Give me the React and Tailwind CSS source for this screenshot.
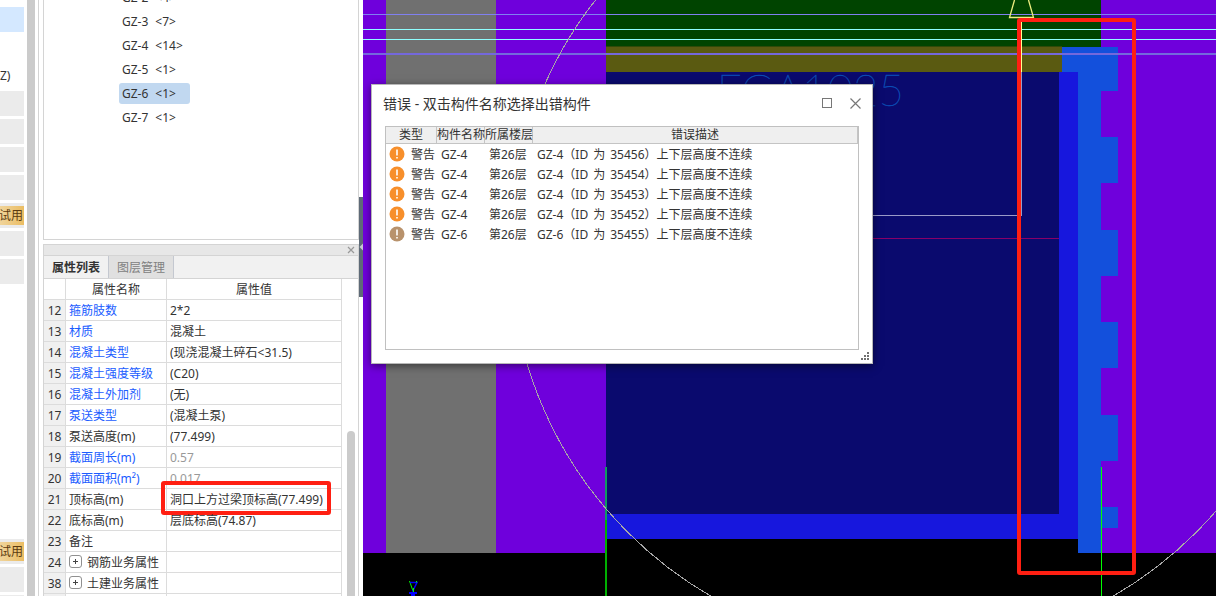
import React, { useState } from "react";

const style = {
  page: "relative flex h-screen w-full overflow-hidden bg-white text-xs text-[#333] font-['Noto_Sans','Noto_Sans_CJK_SC',sans-serif]",
  cell: "h-[21px] p-0 pt-[2px] border-r border-b border-[#dcdcdc] leading-4 font-normal whitespace-nowrap",
  head: "h-[17px] p-0 border-r border-b border-[#c4c4c4] bg-[#efefef] leading-4 font-normal whitespace-nowrap",
};

const navItems = [
  { type: "active" },
  { type: "plain" },
  { type: "plain", text: "Z)" },
  { type: "group" },
  { type: "group" },
  { type: "group" },
  { type: "group" },
  { type: "group", trial: true },
  { type: "group" },
  { type: "group" },
  ...Array.from({ length: 9 }, () => ({ type: "plain" })),
  { type: "group", trial: true },
  { type: "group" },
  { type: "group" },
];

const navBg = {
  active: "bg-[#d4e8ff]",
  plain: "bg-white",
  group: "bg-[#ebebeb]",
};

const columns = [
  { name: "GZ-2", count: 4 },
  { name: "GZ-3", count: 7 },
  { name: "GZ-4", count: 14 },
  { name: "GZ-5", count: 1 },
  { name: "GZ-6", count: 1 },
  { name: "GZ-7", count: 1 },
];

const properties = [
  { no: 12, name: "箍筋肢数", value: "2*2", blue: true },
  { no: 13, name: "材质", value: "混凝土", blue: true },
  { no: 14, name: "混凝土类型", value: "(现浇混凝土碎石<31.5)", blue: true },
  { no: 15, name: "混凝土强度等级", value: "(C20)", blue: true },
  { no: 16, name: "混凝土外加剂", value: "(无)", blue: true },
  { no: 17, name: "泵送类型", value: "(混凝土泵)", blue: true },
  { no: 18, name: "泵送高度(m)", value: "(77.499)" },
  { no: 19, name: "截面周长(m)", value: "0.57", blue: true, locked: true },
  { no: 20, name: "截面面积(m²)", value: "0.017", blue: true, locked: true },
  { no: 21, name: "顶标高(m)", value: "洞口上方过梁顶标高(77.499)", marked: true },
  { no: 22, name: "底标高(m)", value: "层底标高(74.87)" },
  { no: 23, name: "备注", value: "" },
  { no: 24, name: "钢筋业务属性", value: "", group: true },
  { no: 38, name: "土建业务属性", value: "", group: true },
  { no: "", name: "", value: "" },
];

const errors = [
  { name: "GZ-4", id: 35456 },
  { name: "GZ-4", id: 35454 },
  { name: "GZ-4", id: 35453 },
  { name: "GZ-4", id: 35452 },
  { name: "GZ-6", id: 35455, visited: true },
];

const NavStrip = () => (
  <nav className="w-[27px] shrink-0 overflow-hidden pt-[7px] pr-[3px]">
    {navItems.map((item, i) => (
      <div
        key={i}
        className={`mb-[3px] flex h-[25px] items-center overflow-hidden ${navBg[item.type]}`}
      >
        {item.text}
        {item.trial && (
          <div className="flex h-[19px] w-full items-center justify-end bg-linear-to-r from-[#f0d49a] to-[#ebbd62] pr-px whitespace-nowrap text-[#5a3a10]">
            费试用
          </div>
        )}
      </div>
    ))}
  </nav>
);

const ColumnTree = ({ selected, onSelect }) => (
  <div className="h-60 shrink-0 overflow-hidden border-x border-b border-[#d4d4d4]">
    <ul className="-mt-[15px] pl-[75px]">
      {columns.map((c) => (
        <li key={c.name} className="flex h-6 items-center">
          <button
            onClick={() => onSelect(c.name)}
            className={`flex h-[21px] min-w-[71px] items-center gap-[7px] rounded-[3px] px-[3px] pt-[2px] ${
              selected === c.name ? "bg-[#c1d8f0]" : ""
            }`}
          >
            <span>{c.name}</span>
            <span>&lt;{c.count}&gt;</span>
          </button>
        </li>
      ))}
    </ul>
  </div>
);

const PropertyPanel = () => {
  const [tab, setTab] = useState(0);
  return (
    <div className="mt-1 flex min-h-0 flex-1 flex-col overflow-hidden border-x border-[#d4d4d4]">
      <div className="flex h-3 shrink-0 items-center justify-end border-y border-[#d4d4d4] bg-[#e7e7e7] pr-[3px]">
        <button aria-label="关闭">
          <svg width="8" height="8" viewBox="0 0 8 8" stroke="#999" strokeWidth="1.2">
            <path d="M1 1L7 7M7 1L1 7" />
          </svg>
        </button>
      </div>
      <div className="flex h-[23px] shrink-0 border-b border-[#d4d4d4] bg-[#f1f1f1]">
        {["属性列表", "图层管理"].map((t, i) => (
          <button
            key={t}
            onClick={() => setTab(i)}
            className={`w-[65px] border-r border-[#c4c8d0] pt-[2px] ${
              tab === i ? "bg-[#f1f1f1] font-bold" : "bg-[#e0e0e0] text-[#808080]"
            }`}
          >
            {t}
          </button>
        ))}
      </div>
      <div className="flex min-h-0 flex-1">
        <div className="min-w-0 flex-1">
          <table className="w-full table-fixed border-separate border-spacing-0">
            <colgroup>
              <col className="w-[22px]" />
              <col className="w-[101px]" />
              <col />
            </colgroup>
            <thead>
              <tr>
                <th className={style.cell}></th>
                <th className={style.cell}>属性名称</th>
                <th className={style.cell}>属性值</th>
              </tr>
            </thead>
            <tbody>
              {properties.map((p, i) => (
                <tr key={i}>
                  <td className={`${style.cell} bg-[#f0f0f0] text-center`}>{p.no}</td>
                  <td className={`${style.cell} ${p.blue ? "text-[#1a5cff]" : ""}`}>
                    <div className="flex items-start pl-[3px]">
                      {p.group && (
                        <button
                          aria-label={p.name}
                          className="mr-[5px] flex h-[13px] w-[13px] items-center justify-center rounded-[3px] border border-[#909090]"
                        >
                          <svg width="7" height="7" viewBox="0 0 7 7" stroke="#444">
                            <path d="M1 3.5H6M3.5 1V6" />
                          </svg>
                        </button>
                      )}
                      {p.name}
                    </div>
                  </td>
                  <td
                    className={`${style.cell} relative pl-[3px] ${
                      p.locked ? "text-[#999]" : ""
                    }`}
                  >
                    {p.value}
                    {p.marked && (
                      <div className="absolute -top-2 -left-[6px] h-[34px] w-[170px] rounded-[3px] border-4 border-[#ff1f12]"></div>
                    )}
                  </td>
                </tr>
              ))}
            </tbody>
          </table>
        </div>
        <div className="flex w-4 shrink-0 justify-end pt-[152px] pr-[3px]">
          <div className="w-2 rounded-t-full bg-[#cbcbcb]"></div>
        </div>
      </div>
    </div>
  );
};

const Splitter = () => (
  <div className="flex w-1 shrink-0 flex-col pt-[197px]">
    <div className="flex h-[100px] items-center bg-[#5f6b78]">
      <svg width="4" height="8" viewBox="0 0 4 8" fill="#c8ccd2">
        <path d="M4 0.5V7.5L0.5 4Z" />
      </svg>
    </div>
  </div>
);

const ModelView = () => (
  <div className="relative min-w-0 flex-1 overflow-hidden bg-black">
    <svg
      className="absolute inset-0 h-full w-full"
      viewBox="363 0 853 596"
      preserveAspectRatio="xMinYMin slice"
      fill="none"
    >
      {/* slabs and walls */}
      <g shapeRendering="crispEdges">
        <path fill="#6f00dc" d="M363 0H606V553H363ZM1101 0H1216V553H1101Z" />
        <path fill="#707070" d="M386 0H496V553H386Z" />
        <path fill="#004400" d="M606 0H1101V47H606Z" />
        <path fill="#5a5a11" d="M606 47H1062V72H606Z" />
        <path fill="#304a08" d="M606 46H1062V47H606Z" />
        <path fill="#1717dd" d="M606 72H1078V539H606Z" />
        <path fill="#0a0a6e" d="M606 72H1059V514H606Z" />
        <path
          fill="#1350dc"
          d="M1062 47H1118V91H1101V137H1118V183H1101V230H1118V276H1101V322H1118V368H1101V415H1118V461H1101V507H1118V528H1101V553H1078V72H1062Z"
        />
      </g>

      <text
        x="904"
        y="106"
        textAnchor="end"
        fill="#0a4cb4"
        stroke="#0a4cb4"
        strokeWidth="0.4"
        fontSize="44"
        fontWeight="100"
        fontFamily="Lato, sans-serif"
      >
        FGA1025
      </text>

      {/* axis lines */}
      <g shapeRendering="crispEdges">
        <path stroke="#8080f0" d="M363 14.5H1216" />
        <path stroke="#90ffff" d="M363 29.5H1216M363 39.5H1216" />
        <path stroke="#7468dc" strokeWidth="2" d="M363 54H1216" />
        <path stroke="#9a9ac8" d="M606 215.5H1021.5V72" />
        <path stroke="#ffff90" d="M1021.5 72V18" />
        <path stroke="#880068" d="M606 238.5H1059" />
        <path stroke="#109a60" strokeWidth="2" d="M606 467V520" />
        <path stroke="#00b000" strokeWidth="2" d="M606 520V596" />
        <path stroke="#00ff00" d="M1101.5 467V596" />
        <circle cx="912" cy="248" r="402" stroke="#a8a8a8" />
      </g>
      <path stroke="#eeee80" strokeWidth="1.3" d="M1014.5 0L1009.5 17.5H1033.5L1028.5 0" />

      {/* origin mark */}
      <path stroke="#00ff00" d="M409.5 581L413 591" />
      <path stroke="#0000ff" strokeWidth="1.5" d="M410 582.5H417L412.5 591.5" />
      <path stroke="#00ff00" d="M416.5 581V582.5M413.5 588V592" />
      <path fill="#0000ff" d="M409 592H417V594H415V596H411V594H409Z" />

      <rect x="1019" y="20" width="115" height="553" rx="1" stroke="#ff1f12" strokeWidth="4" />
    </svg>
  </div>
);

const WarnIcon = ({ visited }) => (
  <svg width="16" height="16" viewBox="0 0 16 16">
    <circle cx="8" cy="8" r="7.5" fill={visited ? "#b8926c" : "#f78f2b"} />
    <path d="M8 3.5V9.5" stroke="#fff" strokeWidth="1.6" />
    <path d="M8 11V12.6" stroke="#fff" strokeWidth="1.6" />
  </svg>
);

const ErrorDialog = () => (
  <div
    role="dialog"
    className="absolute top-[84px] left-[371px] flex h-[280px] w-[502px] flex-col border border-[#b8b8b8] bg-white pb-[13px] shadow-[0_2px_8px_rgba(0,0,0,0.5)]"
  >
    <div className="mb-1 flex h-[37px] shrink-0 items-center justify-between px-[11px]">
      <h1 className="text-sm leading-5 whitespace-nowrap">
        错误 - 双击构件名称选择出错构件
      </h1>
      <div className="flex items-center gap-[17px] text-[#777]">
        <button aria-label="最大化">
          <svg width="11" height="11" viewBox="0 0 11 11" fill="none" stroke="currentColor">
            <rect x="0.5" y="0.5" width="9" height="9" />
          </svg>
        </button>
        <button aria-label="关闭">
          <svg width="11" height="11" viewBox="0 0 11 11" stroke="currentColor">
            <path d="M0.5 0.5L10.5 10.5M10.5 0.5L0.5 10.5" strokeWidth="1.2" />
          </svg>
        </button>
      </div>
    </div>
    <div className="mx-[13px] min-h-0 flex-1 border border-[#c0c0c0]">
      <table className="w-full table-fixed border-separate border-spacing-0">
        <colgroup>
          <col className="w-[51px]" />
          <col className="w-12" />
          <col className="w-12" />
          <col />
        </colgroup>
        <thead>
          <tr>
            <th className={style.head}>类型</th>
            <th className={style.head}>构件名称</th>
            <th className={style.head}>所属楼层</th>
            <th className={style.head}>错误描述</th>
          </tr>
        </thead>
        <tbody>
          {errors.map((e) => (
            <tr key={e.id} className="h-5 leading-4 whitespace-nowrap">
              <td className="p-0">
                <div className="flex items-center gap-[6px] pl-[3px]">
                  <WarnIcon visited={e.visited} />
                  <span className="pt-[2px]">警告</span>
                </div>
              </td>
              <td className="p-0 pt-[2px] pl-1">{e.name}</td>
              <td className="p-0 pt-[2px] pl-1">第26层</td>
              <td className="p-0 pt-[2px] pl-1">
                <div className="flex gap-[5px]">
                  <span>{e.name}（ID</span>
                  <span>为</span>
                  <span>{e.id}）上下层高度不连续</span>
                </div>
              </td>
            </tr>
          ))}
        </tbody>
      </table>
    </div>
    <svg
      className="absolute right-[3px] bottom-[3px]"
      width="8"
      height="8"
      viewBox="0 0 8 8"
      fill="#707070"
      shapeRendering="crispEdges"
    >
      <path d="M6 0H8V2H6ZM3 3H5V5H3ZM6 3H8V5H6ZM0 6H2V8H0ZM3 6H5V8H3ZM6 6H8V8H6Z" />
    </svg>
  </div>
);

const App = () => {
  const [selected, setSelected] = useState("GZ-6");
  return (
    <div className={style.page}>
      <NavStrip />
      <div className="w-2 shrink-0 bg-[#cbcbcb]"></div>
      <div className="ml-[3px] flex w-[321px] shrink-0 flex-col border-l border-[#d4d4d4] pl-1">
        <ColumnTree selected={selected} onSelect={setSelected} />
        <PropertyPanel />
      </div>
      <Splitter />
      <ModelView />
      <ErrorDialog />
    </div>
  );
};

export default App;
